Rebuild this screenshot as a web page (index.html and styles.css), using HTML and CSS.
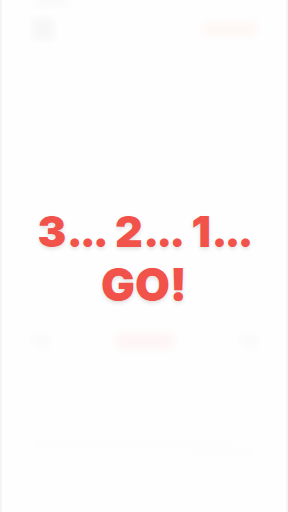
FILE: index.html
```html
<!DOCTYPE html>
<html>
<head>
<meta charset="utf-8">
<link rel="stylesheet" href="styles.css">
</head>
<body>
<div class="screen">
  <div class="bg">
    <div class="top-label"></div>
    <div class="top-row">
      <div class="avatar"></div>
      <div class="pill"></div>
    </div>
    <div class="spacer"></div>
    <div class="mid-row">
      <div class="chip"></div>
      <div class="center-blob"></div>
      <div class="chip"></div>
    </div>
    <div class="lines">
      <div class="line"></div>
      <div class="line short"></div>
    </div>
  </div>
  <div class="overlay">
    <div class="count">3<span class="dots">...</span> 2<span class="dots">...</span> 1<span class="dots">...</span></div>
    <div class="go">GO!</div>
  </div>
</div>
</body>
</html>
```
FILE: styles.css
```css
html, body {
  margin: 0;
  padding: 0;
  width: 288px;
  height: 512px;
  overflow: hidden;
  background: #ffffff;
}
.screen {
  position: relative;
  width: 288px;
  height: 512px;
  background: #fdfdfd;
  border-left: 2px solid #f4f4f4;
  border-right: 2px solid #f4f4f4;
  box-sizing: border-box;
  overflow: hidden;
}
.bg {
  display: flex;
  flex-direction: column;
  padding: 0 28px 0 30px;
  height: 100%;
  box-sizing: border-box;
  filter: blur(3px);
}
.top-label {
  width: 36px;
  height: 6px;
  background: #f2f2f2;
  margin-left: 2px;
}
.top-row {
  display: flex;
  justify-content: space-between;
  align-items: center;
  margin-top: 12px;
}
.avatar {
  width: 22px;
  height: 22px;
  background: #eeeeee;
  border-radius: 4px;
}
.pill {
  width: 56px;
  height: 14px;
  background: #fdeee8;
  border-radius: 7px;
}
.spacer { height: 292px; }
.mid-row {
  display: flex;
  justify-content: space-between;
  align-items: center;
}
.chip {
  width: 18px;
  height: 10px;
  background: #f4f4f4;
}
.center-blob {
  width: 60px;
  height: 18px;
  background: #fdecec;
  border-radius: 6px;
}
.lines {
  margin-top: 92px;
  display: flex;
  flex-direction: column;
  gap: 6px;
}
.line {
  height: 3px;
  background: #f4f4f4;
  width: 200px;
}
.line.short { width: 60px; margin-left: 160px; }
.overlay {
  position: absolute;
  left: 0;
  top: 0;
  width: 100%;
  height: 100%;
  background: rgba(255,255,255,0.55);
  display: flex;
  flex-direction: column;
  align-items: center;
  padding-top: 204px;
  box-sizing: border-box;
  font-family: "Inter", "Lato", sans-serif;
  font-weight: 900;
  color: #f1524a;
  text-shadow: 0 2px 4px rgba(0,0,0,0.12);
}
.count {
  font-size: 43px;
  line-height: 54px;
  letter-spacing: 0.5px;
  white-space: nowrap;
}
.dots {
  letter-spacing: -3px;
}
.go {
  font-size: 45px;
  line-height: 54px;
}
```
